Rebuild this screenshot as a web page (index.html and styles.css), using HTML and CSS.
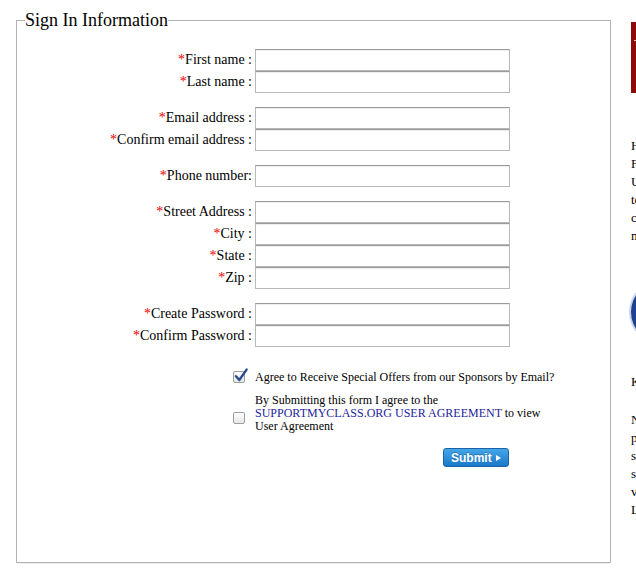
FILE: index.html
```html
<!DOCTYPE html>
<html>
<head>
<meta charset="utf-8">
<title>Sign In Information</title>
<link rel="stylesheet" href="styles.css">
</head>
<body>
<div class="page">
  <fieldset class="signin">
    <legend class="signin-legend">Sign In Information</legend>

    <div class="group">
      <label class="lbl"><span class="req">*</span>First name :</label><input class="field" type="text">
      <label class="lbl"><span class="req">*</span>Last name :</label><input class="field" type="text">
    </div>

    <div class="group">
      <label class="lbl"><span class="req">*</span>Email address :</label><input class="field" type="text">
      <label class="lbl"><span class="req">*</span>Confirm email address :</label><input class="field" type="text">
    </div>

    <div class="group">
      <label class="lbl"><span class="req">*</span>Phone number:</label><input class="field" type="text">
    </div>

    <div class="group">
      <label class="lbl"><span class="req">*</span>Street Address :</label><input class="field" type="text">
      <label class="lbl"><span class="req">*</span>City :</label><input class="field" type="text">
      <label class="lbl"><span class="req">*</span>State :</label><input class="field" type="text">
      <label class="lbl"><span class="req">*</span>Zip :</label><input class="field" type="text">
    </div>

    <div class="group">
      <label class="lbl"><span class="req">*</span>Create Password :</label><input class="field" type="password">
      <label class="lbl"><span class="req">*</span>Confirm Password :</label><input class="field" type="password">
    </div>

    <div class="checks">
      <span class="cb cb-checked">
        <svg class="tick" width="16" height="16" viewBox="0 0 16 16"><path d="M3 8.2 L6.3 12 L13.6 1.6" fill="none" stroke="#2b4c8c" stroke-width="2.4" stroke-linecap="round" stroke-linejoin="round"/></svg>
      </span>
      <span class="check-text">Agree to Receive Special Offers from our Sponsors by Email?</span>

      <span class="cb cb-second"></span>
      <span class="check-text multi">By Submitting this form I agree to the <a class="agree-link" href="#">SUPPORTMYCLASS.ORG USER AGREEMENT</a> to view User Agreement</span>

      <span></span>
      <div class="submit-wrap">
        <button class="submit" type="button"><span>Submit</span><span class="arrow"></span></button>
      </div>
    </div>
  </fieldset>

  <aside class="side">
    <div class="banner"><span class="banner-mark"></span></div>
    <p class="side-text">
      <span class="ln">Help your school raise funds</span>
      <span class="ln">For every purchase made through</span>
      <span class="ln">Use our partners and sponsors</span>
      <span class="ln">to support your class and</span>
      <span class="ln">collect rewards for your</span>
      <span class="ln">members.</span>
    </p>
    <div class="badge"></div>
    <h4 class="side-head">Keep in touch</h4>
    <p class="side-text second">
      <span class="ln">Need help? Contact our</span>
      <span class="ln">program team and we will</span>
      <span class="ln">support you with</span>
      <span class="ln">setting up your class</span>
      <span class="ln">via phone or email.</span>
      <span class="ln">Learn more</span>
    </p>
  </aside>
</div>
</body>
</html>
```

FILE: styles.css
```css
html, body {
  margin: 0;
  padding: 0;
  background: #fff;
  overflow: hidden;
}
body {
  font-family: "Liberation Serif", "Times New Roman", serif;
  color: #000;
  width: 636px;
  height: 585px;
}
.page {
  display: flex;
  align-items: flex-start;
  padding: 10px 0 0 16px;
  width: 900px;
}
.signin {
  box-sizing: border-box;
  width: 595px;
  flex: none;
  margin: 0;
  padding: 19px 0 95px 0;
  border: 1px solid #b3b3b3;
  box-shadow: 0 2px 0 -1px #eeeeee;
}
.signin-legend {
  font-size: 18px;
  line-height: 20px;
  padding: 0;
  margin-left: 8px;
}
.group {
  display: grid;
  grid-template-columns: 235px 255px;
  column-gap: 3px;
  margin-bottom: 14px;
}
.lbl {
  font-size: 14px;
  text-align: right;
  align-self: center;
  white-space: nowrap;
}
.req {
  color: #e60000;
}
.field {
  box-sizing: border-box;
  height: 22px;
  width: 255px;
  margin: 0;
  padding: 0 3px;
  border: 1px solid #b8b8b8;
  border-top-color: #9a9a9a;
  box-shadow: inset 0 1px 1px rgba(0,0,0,0.07);
  background: #fff;
  font: 14px "Liberation Serif", serif;
}
.checks {
  display: grid;
  grid-template-columns: 235px 300px;
  column-gap: 3px;
  row-gap: 10px;
  margin-top: 23px;
  font-size: 12px;
}
.cb {
  justify-self: end;
  align-self: center;
  margin-right: 7px;
  position: relative;
  box-sizing: border-box;
  width: 12px;
  height: 12px;
  border: 1px solid #9d9d9d;
  border-radius: 2px;
  background: linear-gradient(#ffffff, #e6e6e6);
}
.cb-second {
  margin-top: 8px;
}
.tick {
  position: absolute;
  left: -1px;
  top: -4px;
}
.check-text {
  line-height: 14px;
}
.check-text.multi {
  line-height: 13px;
}
.agree-link {
  color: #1d1d9e;
  text-decoration: none;
}
.submit-wrap {
  grid-column: 2;
  width: 255px;
  display: flex;
  justify-content: flex-end;
  padding-top: 5px;
}
.submit {
  box-sizing: border-box;
  width: 66px;
  height: 19px;
  margin-right: 1px;
  padding: 0 7px 0 7px;
  display: flex;
  align-items: center;
  justify-content: space-between;
  border: 1px solid #1b62a6;
  border-radius: 3px;
  background: linear-gradient(#44a6e8, #1a78c8);
  color: #fff;
  font: bold 12px "Liberation Sans", Arial, sans-serif;
  text-shadow: 0 -1px 0 rgba(0,0,0,0.25);
}
.arrow {
  flex: none;
  width: 0;
  height: 0;
  border-left: 5px solid #fff;
  border-top: 3.5px solid transparent;
  border-bottom: 3.5px solid transparent;
}
.side {
  flex: none;
  width: 240px;
  margin-left: 20px;
  margin-top: 12px;
  font-size: 13px;
}
.banner {
  height: 71px;
  background: #8e0b0b;
  position: relative;
}
.banner-mark {
  position: absolute;
  left: 3px;
  top: 18px;
  width: 4px;
  height: 1px;
  background: #e8b4b4;
}
.side-text {
  margin: 44px 0 0 0;
  line-height: 18px;
}
.side-text.second {
  margin-top: 20px;
}
.ln {
  display: block;
  white-space: nowrap;
}
.badge {
  margin-top: 37px;
  width: 60px;
  height: 60px;
  border-radius: 50%;
  background: #1e4290;
  box-shadow: 0 0 0 2px #c9d3e8;
}
.side-head {
  margin: 31px 0 0 0;
  font-size: 13px;
  line-height: 18px;
  font-weight: normal;
}
```
